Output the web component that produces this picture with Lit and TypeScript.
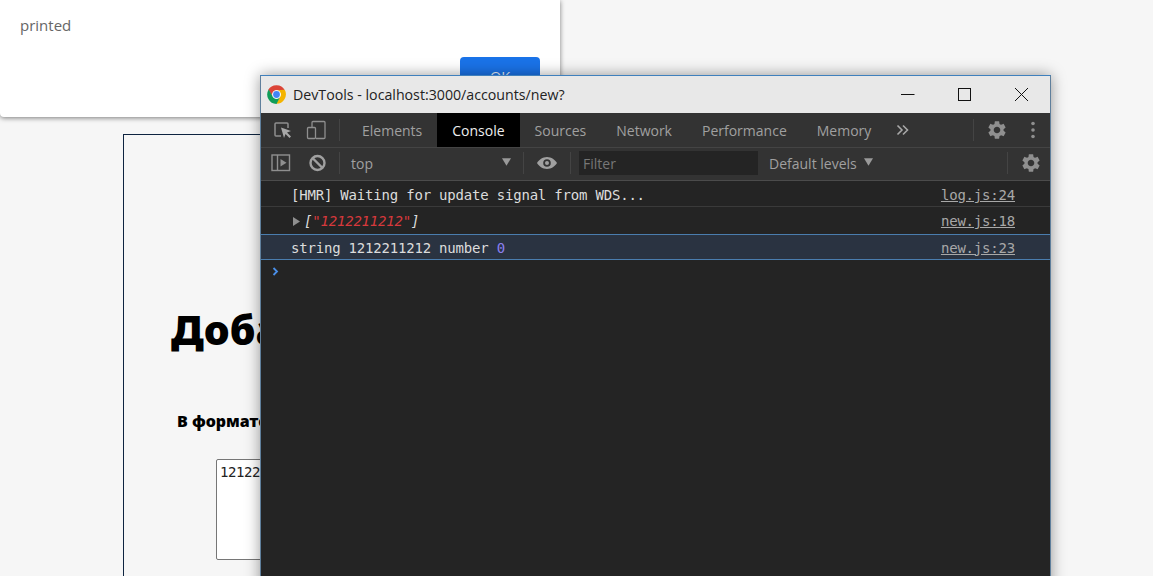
import { LitElement, html, css } from "lit";
import { customElement } from "lit/decorators.js";

const gear = html`<svg class="gear" viewBox="0 0 24 24"><path fill="#8f8f8f" d="M19.14 12.94c.04-.3.06-.61.06-.94 0-.32-.02-.64-.07-.94l2.03-1.58c.18-.14.23-.41.12-.61l-1.92-3.32c-.12-.22-.37-.29-.59-.22l-2.39.96c-.5-.38-1.03-.7-1.62-.94l-.36-2.54c-.04-.24-.24-.41-.48-.41h-3.84c-.24 0-.43.17-.47.41l-.36 2.54c-.59.24-1.13.57-1.62.94l-2.39-.96c-.22-.08-.47 0-.59.22L2.74 8.87c-.12.21-.08.47.12.61l2.03 1.58c-.05.3-.09.63-.09.94s.02.64.07.94l-2.03 1.58c-.18.14-.23.41-.12.61l1.92 3.32c.12.22.37.29.59.22l2.39-.96c.5.38 1.03.7 1.62.94l.36 2.54c.05.24.24.41.48.41h3.84c.24 0 .44-.17.47-.41l.36-2.54c.59-.24 1.13-.56 1.62-.94l2.39.96c.22.08.47 0 .59-.22l1.92-3.32c.12-.22.07-.47-.12-.61l-2.01-1.58zM12 15.6c-1.98 0-3.6-1.62-3.6-3.6s1.62-3.6 3.6-3.6 3.6 1.62 3.6 3.6-1.62 3.6-3.6 3.6z"/></svg>`;

const wedge = "M12 6.6H22.4A12 12 0 0 0 1.6 6L7.32 14.7A5.4 5.4 0 0 1 12 6.6z";

@customElement("app-root")
export class AppRoot extends LitElement {
  static styles = css`
    :host { display: block; width: 1153px; height: 576px; overflow: hidden; position: relative; background: #f6f6f6; font-family: "Open Sans", sans-serif; }
    .card { margin: 134px 0 0 123px; width: 820px; height: 600px; box-sizing: border-box; border: 1px solid #0e2440; padding-top: 170px; }
    h1 { margin: 0 0 0 47px; font: 900 41px/48px "Noto Sans", sans-serif; color: #000; white-space: nowrap; }
    .label { margin: 58px 0 0 53px; font: 900 16px/20px "Noto Sans", sans-serif; color: #000; white-space: nowrap; }
    .input { margin: 28px 0 0 92px; width: 300px; height: 101px; box-sizing: border-box; border: 1px solid #767676; border-radius: 2px; background: #fff; padding: 4px 3px; font: 14px/16px "DejaVu Sans Mono", monospace; letter-spacing: -.4px; color: #222; }

    .dialog { position: absolute; left: 0; top: 0; width: 560px; height: 117px; box-sizing: border-box; background: #fff; border-radius: 0 0 4px 4px; box-shadow: 0 1px 5px rgba(0,0,0,.5); padding: 15px 20px 0; color: #666; font-size: 15px; line-height: 21px; }
    .dialog .actions { display: flex; justify-content: flex-end; margin-top: 21px; }
    .ok { width: 80px; height: 38px; border-radius: 4px; background: #1a73e8; color: #e8f1fd; font-size: 14.5px; display: flex; align-items: center; justify-content: center; }

    .win { position: absolute; left: 260px; top: 75px; width: 791px; height: 520px; box-sizing: border-box; border: 1px solid #5f7f9c; border-top-color: #3f80bd; border-bottom: 0; background: #242424; box-shadow: 0 0 14px rgba(0,0,0,.4); display: flex; flex-direction: column; }
    .title { height: 37px; flex: none; background: #e8e8e8; display: flex; align-items: center; padding-left: 6px; color: #222; font-size: 14.2px; }
    .logo { width: 19px; height: 19px; margin-right: 7px; flex: none; }
    .title .name { flex: 1; white-space: nowrap; }
    .wc { width: 57px; height: 37px; display: flex; align-items: center; justify-content: center; flex: none; }
    .wc svg { width: 15px; height: 15px; }

    .bar { flex: none; background: #333; display: flex; align-items: center; color: #a0a0a0; font-size: 14px; white-space: nowrap; box-sizing: border-box; }
    .tabs { height: 34px; }
    .tools { height: 34px; border-top: 1px solid #444; border-bottom: 1px solid #4b4b4b; padding-bottom: 2px; }
    .tab { height: 34px; padding: 0 15px; display: flex; align-items: center; }
    .tab.on { background: #000; color: #eee; }
    .sep { width: 1px; height: 22px; background: #444; flex: none; }
    .ico { width: 20px; height: 20px; flex: none; }
    .gear { width: 22px; height: 22px; flex: none; }
    .i1 { margin-left: 12px; }
    .i2 { margin-left: 13px; }
    .s1 { margin-left: 13px; margin-right: 7px; }
    .more { margin-left: 10px; width: 13px; flex: none; }
    .s2 { margin-left: 64px; }
    .g1 { margin-left: 12px; }
    .dots { margin-left: 23px; width: 4px; height: 18px; flex: none; }

    .t1 { margin-left: 10px; }
    .t2 { margin-left: 17px; }
    .s3 { margin-left: 11px; }
    .top { margin-left: 11px; width: 151px; }
    .arrow { width: 9px; height: 8px; flex: none; margin-top: -3px; }
    .s4 { margin-left: 12px; }
    .eye { width: 20px; height: 14px; margin-left: 13px; flex: none; }
    .s5 { margin-left: 13px; }
    .filter { margin-left: 8px; width: 179px; height: 24px; box-sizing: border-box; background: #242424; color: #777; padding-left: 4px; display: flex; align-items: center; }
    .levels { margin-left: 11px; width: 95px; }
    .s6 { margin-left: 134px; }
    .g2 { margin-left: 12px; }

    .log { flex: 1; font: 14px/1 "DejaVu Sans Mono", monospace; letter-spacing: -.2px; color: #dcdcdc; }
    .row { display: flex; align-items: center; padding-left: 30px; padding-right: 35px; box-sizing: border-box; white-space: pre; }
    .r1 { height: 26px; border-bottom: 1px solid #3a3a3a; padding-top: 3px; }
    .r2 { height: 27px; padding-left: 32px; padding-top: 1px; font-style: italic; }
    .r3 { height: 26px; background: #2a3341; border-top: 1px solid #4a7dae; border-bottom: 1px solid #4a7dae; padding-top: 1px; }
    .msg { flex: 1; }
    .src { color: #a8a8a8; text-decoration: underline; font-style: normal; }
    .tri { width: 7px; height: 9px; margin-right: 4px; flex: none; }
    .str { color: #d8393c; }
    .num { color: #8b7ff0; }
    .prompt { padding: 7px 0 0 11px; }
    .prompt svg { display: block; width: 7px; height: 9px; }
  `;

  render() {
    return html`
      <div class="card">
        <h1>Добавить</h1>
        <div class="label">В формате</div>
        <div class="input">1212211212</div>
      </div>
      <div class="dialog">
        <div>printed</div>
        <div class="actions"><div class="ok">OK</div></div>
      </div>
      <div class="win">
        <div class="title">
          <svg class="logo" viewBox="0 0 24 24">
            <path fill="#db4437" d=${wedge}/>
            <path fill="#f4b400" d=${wedge} transform="rotate(120 12 12)"/>
            <path fill="#0f9d58" d=${wedge} transform="rotate(240 12 12)"/>
            <circle cx="12" cy="12" r="5.4" fill="#fff"/>
            <circle cx="12" cy="12" r="4.3" fill="#4285f4"/>
          </svg>
          <div class="name">DevTools - localhost:3000/accounts/new?</div>
          <div class="wc"><svg viewBox="0 0 15 15"><path d="M1 7.5h13.5" stroke="#111" stroke-width="1" fill="none"/></svg></div>
          <div class="wc"><svg viewBox="0 0 15 15"><rect x="1.5" y="1.5" width="12" height="12" stroke="#111" fill="none"/></svg></div>
          <div class="wc"><svg viewBox="0 0 15 15"><path d="M1 1l13 13M14 1L1 14" stroke="#111" fill="none"/></svg></div>
        </div>
        <div class="bar tabs">
          <svg class="ico i1" viewBox="0 0 20 20" fill="none">
            <path d="M8 16H3a1 1 0 0 1-1-1V4a1 1 0 0 1 1-1h11a1 1 0 0 1 1 1v4" stroke="#8f8f8f" stroke-width="1.5"/>
            <path d="M8 7.5l10 3.5-4 1.5 4 4-1.5 1.5-4-4-1.5 4z" fill="#a8a8a8"/>
          </svg>
          <svg class="ico i2" viewBox="0 0 20 20" fill="none" stroke="#8f8f8f" stroke-width="1.3">
            <path d="M6 7V2.5a1 1 0 0 1 1-1h11a1 1 0 0 1 1 1v15a1 1 0 0 1-1 1h-8"/>
            <rect x="1.5" y="7.5" width="8" height="11" rx="1"/>
          </svg>
          <div class="sep s1"></div>
          <div class="tab">Elements</div>
          <div class="tab on">Console</div>
          <div class="tab">Sources</div>
          <div class="tab">Network</div>
          <div class="tab">Performance</div>
          <div class="tab">Memory</div>
          <svg class="more" viewBox="0 0 13 12" fill="none" stroke="#a8a8a8" stroke-width="1.6"><path d="M1.5 1.5l4.5 4.5-4.5 4.5M7 1.5L11.500 6 7 10.500"/></svg>
          <div class="sep s2"></div>
          <span class="g1"></span>${gear}
          <svg class="dots" viewBox="0 0 4 18" fill="#8f8f8f"><circle cx="2" cy="2.500" r="1.800"/><circle cx="2" cy="9" r="1.800"/><circle cx="2" cy="15.500" r="1.800"/></svg>
        </div>
        <div class="bar tools">
          <svg class="ico t1" viewBox="0 0 20 20" fill="none" stroke="#8f8f8f" stroke-width="1.4">
            <rect x="1" y="2" width="17.500" height="15.500"/><path d="M6.500 2v15.500"/><path d="M9.500 6l6 3.800-6 3.800z" fill="#8f8f8f" stroke="none"/>
          </svg>
          <svg class="ico t2" viewBox="0 0 20 20" fill="none" stroke="#a0a0a0" stroke-width="2.400">
            <circle cx="9.500" cy="10" r="7"/><path d="M4.500 5l10 10"/>
          </svg>
          <div class="sep s3"></div>
          <div class="top">top</div>
          <svg class="arrow" viewBox="0 0 7 6"><path d="M0 0h7L3.500 6z" fill="#9a9a9a"/></svg>
          <div class="sep s4"></div>
          <svg class="eye" viewBox="0 0 20 14">
            <path fill-rule="evenodd" fill="#a0a0a0" d="M10 1C5.500 1 2 3.800 0 7c2 3.200 5.500 6 10 6s8-2.800 10-6c-2-3.200-5.500-6-10-6zm0 2.200a3.800 3.800 0 1 1 0 7.600 3.800 3.800 0 0 1 0-7.600zM10 5a2 2 0 1 0 0 4 2 2 0 0 0 0-4z"/>
          </svg>
          <div class="sep s5"></div>
          <div class="filter">Filter</div>
          <div class="levels">Default levels</div>
          <svg class="arrow" viewBox="0 0 7 6"><path d="M0 0h7L3.500 6z" fill="#9a9a9a"/></svg>
          <div class="sep s6"></div>
          <span class="g2"></span>${gear}
        </div>
        <div class="log">
          <div class="row r1"><span class="msg">[HMR] Waiting for update signal from WDS...</span><span class="src">log.js:24</span></div>
          <div class="row r2">
            <svg class="tri" viewBox="0 0 7 9"><path d="M0 0l7 4.500L0 9z" fill="#8f8f8f"/></svg>
            <span class="msg">[<span class="str">"1212211212"</span>]</span><span class="src">new.js:18</span>
          </div>
          <div class="row r3"><span class="msg">string 1212211212 number <span class="num">0</span></span><span class="src">new.js:23</span></div>
          <div class="prompt"><svg viewBox="0 0 7 9" fill="none" stroke="#4a8fe8" stroke-width="1.800"><path d="M1.500 1l3.500 3.500L1.500 8"/></svg></div>
        </div>
      </div>
    `;
  }
}
